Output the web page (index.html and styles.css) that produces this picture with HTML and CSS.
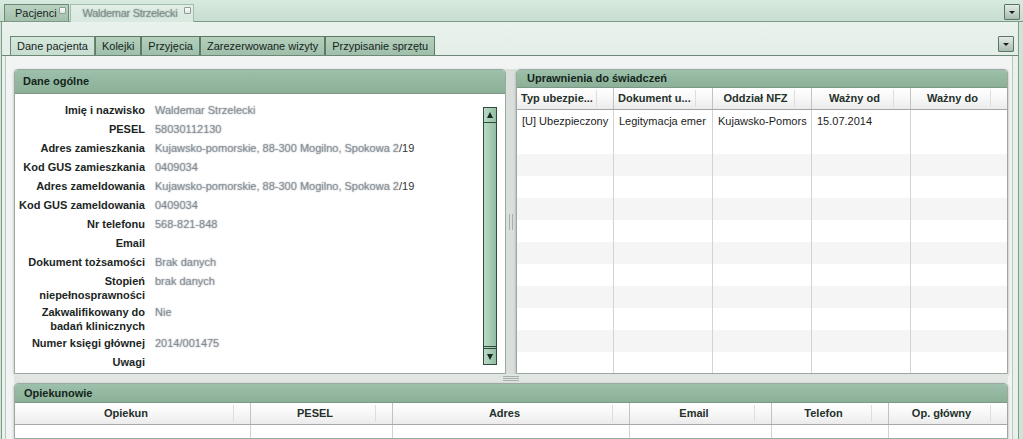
FILE: index.html
```html
<!DOCTYPE html>
<html lang="pl">
<head>
<meta charset="utf-8">
<title>Pacjenci</title>
<link rel="stylesheet" href="styles.css">
</head>
<body>
<div class="app">
  <div class="top-strip">
    <div class="outer-tabs">
      <div class="otab">Pacjenci<span class="close"></span></div>
      <div class="otab active"><span class="blur tabname">Waldemar Strzelecki</span><span class="close"></span></div>
    </div>
    <div class="dd-btn outer-dd"><span class="tri"></span></div>
  </div>

  <div class="frame">
    <div class="inner-bar">
      <div class="itabs">
        <div class="itab active">Dane pacjenta</div>
        <div class="itab">Kolejki</div>
        <div class="itab">Przyjęcia</div>
        <div class="itab">Zarezerwowane wizyty</div>
        <div class="itab">Przypisanie sprzętu</div>
      </div>
      <div class="dd-btn inner-dd"><span class="tri"></span></div>
    </div>

    <div class="content">
      <div class="top-row">
        <section class="panel left">
          <header class="ph">Dane ogólne</header>
          <div class="pbody form">
            <div class="fields">
              <div class="f"><div class="lab">Imię i nazwisko</div><div class="val"><span class="blur">Waldemar Strzelecki</span></div></div>
              <div class="f"><div class="lab">PESEL</div><div class="val"><span class="blur">58030112130</span></div></div>
              <div class="f"><div class="lab">Adres zamieszkania</div><div class="val"><span class="blur">Kujawsko-pomorskie, 88-300 Mogilno, Spokowa 2</span>/19</div></div>
              <div class="f"><div class="lab">Kod GUS zamieszkania</div><div class="val"><span class="blur">0409034</span></div></div>
              <div class="f"><div class="lab">Adres zameldowania</div><div class="val"><span class="blur">Kujawsko-pomorskie, 88-300 Mogilno, Spokowa 2</span>/19</div></div>
              <div class="f"><div class="lab">Kod GUS zameldowania</div><div class="val"><span class="blur">0409034</span></div></div>
              <div class="f"><div class="lab">Nr telefonu</div><div class="val"><span class="blur">568-821-848</span></div></div>
              <div class="f"><div class="lab">Email</div><div class="val"></div></div>
              <div class="f"><div class="lab">Dokument tożsamości</div><div class="val"><span class="blur">Brak danych</span></div></div>
              <div class="f"><div class="lab">Stopień niepełnosprawności</div><div class="val"><span class="blur">brak danych</span></div></div>
              <div class="f"><div class="lab">Zakwalifikowany do badań klinicznych</div><div class="val"><span class="blur">Nie</span></div></div>
              <div class="f"><div class="lab">Numer księgi głównej</div><div class="val"><span class="blur">2014/001475</span></div></div>
              <div class="f"><div class="lab">Uwagi</div><div class="val"></div></div>
            </div>
            <div class="vscroll">
              <div class="sb-btn up"><span class="tri-up"></span></div>
              <div class="sb-btn down"><span class="tri-down"></span></div>
            </div>
          </div>
        </section>

        <div class="vsplit"><span class="grip-v"></span></div>

        <section class="panel right">
          <header class="ph">Uprawnienia do świadczeń</header>
          <div class="grid up-grid">
            <div class="g-head">
              <div class="hc lefttxt">Typ ubezpie...</div>
              <div class="hc lefttxt">Dokument u...</div>
              <div class="hc">Oddział NFZ</div>
              <div class="hc">Ważny od</div>
              <div class="hc">Ważny do</div>
            </div>
            <div class="g-row"><div class="c">[U] Ubezpieczony</div><div class="c">Legitymacja emer</div><div class="c">Kujawsko-Pomors</div><div class="c">15.07.2014</div><div class="c"></div></div>
            <div class="g-row"><div class="c"></div><div class="c"></div><div class="c"></div><div class="c"></div><div class="c"></div></div>
            <div class="g-row"><div class="c"></div><div class="c"></div><div class="c"></div><div class="c"></div><div class="c"></div></div>
            <div class="g-row"><div class="c"></div><div class="c"></div><div class="c"></div><div class="c"></div><div class="c"></div></div>
            <div class="g-row"><div class="c"></div><div class="c"></div><div class="c"></div><div class="c"></div><div class="c"></div></div>
            <div class="g-row"><div class="c"></div><div class="c"></div><div class="c"></div><div class="c"></div><div class="c"></div></div>
            <div class="g-row"><div class="c"></div><div class="c"></div><div class="c"></div><div class="c"></div><div class="c"></div></div>
            <div class="g-row"><div class="c"></div><div class="c"></div><div class="c"></div><div class="c"></div><div class="c"></div></div>
            <div class="g-row"><div class="c"></div><div class="c"></div><div class="c"></div><div class="c"></div><div class="c"></div></div>
            <div class="g-row"><div class="c"></div><div class="c"></div><div class="c"></div><div class="c"></div><div class="c"></div></div>
            <div class="g-row"><div class="c"></div><div class="c"></div><div class="c"></div><div class="c"></div><div class="c"></div></div>
            <div class="g-row"><div class="c"></div><div class="c"></div><div class="c"></div><div class="c"></div><div class="c"></div></div>
            <div class="g-row"><div class="c"></div><div class="c"></div><div class="c"></div><div class="c"></div><div class="c"></div></div>
          </div>
        </section>
      </div>

      <div class="hsplit"><span class="grip-h"></span></div>

      <section class="panel bottom">
        <header class="ph">Opiekunowie</header>
        <div class="grid op-grid">
          <div class="g-head">
            <div class="hc">Opiekun</div>
            <div class="hc">PESEL</div>
            <div class="hc">Adres</div>
            <div class="hc">Email</div>
            <div class="hc">Telefon</div>
            <div class="hc">Op. główny</div>
          </div>
          <div class="g-row"><div class="c"></div><div class="c"></div><div class="c"></div><div class="c"></div><div class="c"></div><div class="c"></div></div>
          <div class="g-row"><div class="c"></div><div class="c"></div><div class="c"></div><div class="c"></div><div class="c"></div><div class="c"></div></div>
        </div>
      </section>
    </div>
  </div>
</div>
</body>
</html>
```

FILE: styles.css
```css
* { box-sizing: border-box; margin: 0; padding: 0; }
html, body { width: 1023px; height: 439px; overflow: hidden; }
body {
  font-family: "Liberation Sans", Arial, sans-serif;
  font-size: 11px;
  color: #1d2a22;
  background: #cfe3d7;
}
.app { display: flex; flex-direction: column; height: 439px; }

/* ---------- top strip with outer tabs ---------- */
.top-strip {
  height: 22px;
  flex: none;
  display: flex;
  justify-content: space-between;
  align-items: flex-end;
  padding: 0 3px 0 4px;
  background: linear-gradient(#d7eade, #c7ded0);
  border-bottom: 1px solid #7d9a87;
}
.outer-tabs { display: flex; align-items: flex-end; gap: 1px; height: 100%; }
.otab {
  position: relative;
  height: 17px;
  line-height: 16px;
  padding: 0 11px 0 10px;
  border: 1px solid #6c8a76;
  border-bottom: none;
  background: linear-gradient(#b9d3c1, #a2bfab);
  color: #16241b;
  white-space: nowrap;
}
.otab.active {
  height: 18px;
  margin-bottom: -1px;
  padding: 0 16px 0 12px;
  background: linear-gradient(#e2eee6, #d9e9df);
  border-color: #a5bcad;
}
.close {
  position: absolute;
  top: 2px;
  right: 2px;
  width: 7px;
  height: 7px;
  border: 1px solid #8e9c93;
  border-radius: 1px;
  background: linear-gradient(#fbfdfc, #dfe7e2);
}
.blur {
  display: inline-block;
  color: rgba(120, 128, 138, 0.55);
  text-shadow: 0 0 1.2px rgba(110, 118, 128, 0.95);
}
.tabname { color: rgba(110, 135, 122, 0.55); letter-spacing: -0.3px; }

.dd-btn {
  width: 16px;
  height: 16px;
  border: 1px solid #5b7464;
  border-radius: 1px;
  background: linear-gradient(#e3ebe6, #a9bcb0);
  display: flex;
  align-items: center;
  justify-content: center;
  flex: none;
}
.outer-dd { align-self: flex-start; margin-top: 4px; }
.tri {
  width: 0; height: 0;
  border-left: 3px solid transparent;
  border-right: 3px solid transparent;
  border-top: 3px solid #1c1c1c;
}

/* ---------- frame & inner tabs ---------- */
.frame {
  flex: 1;
  min-height: 0;
  display: flex;
  flex-direction: column;
  margin: 0 4px 0 1px;
  border-left: 1px solid #7f9b89;
  border-right: 1px solid #7f9b89;
  background: #e8f1eb;
}
.inner-bar {
  height: 34px;
  flex: none;
  display: flex;
  justify-content: space-between;
  align-items: flex-end;
  padding: 0 4px 0 8px;
  border-bottom: 1px solid #6c8776;
  background: linear-gradient(#e9f2ec, #e4eee8);
}
.itabs { display: flex; }
.itab {
  height: 19px;
  line-height: 18px;
  padding: 0 6px;
  border: 1px solid #5d7a67;
  border-bottom: none;
  background: linear-gradient(#b5d0bd, #9fbfaa);
  color: #16241b;
  white-space: nowrap;
}
.itab.active { background: linear-gradient(#d6e8dc, #c7ddcf); border-color: #6c8776; }
.inner-dd { align-self: flex-start; margin-top: 14px; }

/* ---------- content ---------- */
.content {
  flex: 1;
  min-height: 0;
  margin: 0 5px 0 3px;
  border-left: 1px solid #bac6be;
  border-right: 1px solid #bac6be;
  background: #f1f4f2;
  padding: 13px 4px 0 8px;
  display: flex;
  flex-direction: column;
}
.top-row { height: 305px; flex: none; display: flex; }

.panel {
  border: 1px solid #9aaaa0;
  border-radius: 4px 4px 0 0;
  background: #fff;
  display: flex;
  flex-direction: column;
  box-shadow: 0 1px 3px rgba(0, 0, 0, 0.28);
  overflow: hidden;
  min-height: 0;
}
.panel.left { width: 492px; flex: none; }
.panel.right { flex: 1; }
.panel.bottom { flex: 1; }

.ph {
  flex: none;
  font-weight: bold;
  color: #13251a;
  background: linear-gradient(#9dc0aa, #8caf98);
  border-bottom: 1px solid #7c9886;
  padding-left: 8px;
}
.left .ph { height: 24px; line-height: 23px; }
.right .ph { height: 18px; line-height: 17px; padding-left: 10px; }
.bottom .ph { height: 19px; line-height: 18px; padding-left: 9px; }

/* ---------- form ---------- */
.pbody.form { flex: 1; display: flex; min-height: 0; }
.fields { flex: 1; padding-top: 6px; overflow: hidden; }
.f {
  display: grid;
  grid-template-columns: 130px 1fr;
  column-gap: 10px;
  min-height: 19px;
  padding-top: 3px;
  line-height: 14px;
}
.lab { text-align: right; font-weight: bold; color: #1b261f; }
.val { white-space: nowrap; color: #333; }

.vscroll {
  width: 14px;
  flex: none;
  margin: 13px 8px 8px 0;
  border: 1px solid #2f4b3a;
  background: linear-gradient(90deg, #b9dac6, #a3c9b2 60%, #93bca2);
  display: flex;
  flex-direction: column;
  justify-content: space-between;
}
.sb-btn { display: flex; align-items: center; justify-content: center; }
.sb-btn.up { height: 15px; border-bottom: 1px solid #2f4b3a; }
.sb-btn.down { height: 18px; border-top: 3px double #2f4b3a; }
.tri-up {
  width: 0; height: 0;
  border-left: 3px solid transparent;
  border-right: 3px solid transparent;
  border-bottom: 6px solid #16291d;
}
.tri-down {
  width: 0; height: 0;
  border-left: 3px solid transparent;
  border-right: 3px solid transparent;
  border-top: 6px solid #16291d;
}

/* ---------- splitters ---------- */
.vsplit {
  width: 10px;
  flex: none;
  display: flex;
  align-items: center;
  justify-content: center;
  background: #dadfdc;
}
.grip-v { width: 4px; height: 16px; border-left: 1px solid #a8b0ab; border-right: 1px solid #a8b0ab; }
.hsplit {
  height: 9px;
  flex: none;
  display: flex;
  align-items: center;
  justify-content: center;
  background: #e2e6e3;
}
.grip-h { width: 16px; height: 5px; border-top: 1px solid #a8b0ab; border-bottom: 1px solid #a8b0ab; position: relative; }
.grip-h::after { content: ""; position: absolute; left: 0; right: 0; top: 1px; border-top: 1px solid #a8b0ab; }

/* ---------- grids ---------- */
.grid { flex: 1; display: flex; flex-direction: column; min-height: 0; overflow: hidden; }
.g-head, .g-row { display: grid; flex: none; }
.up-grid .g-head, .up-grid .g-row { grid-template-columns: 97px 99px 99px 99px 1fr; }
.op-grid .g-head, .op-grid .g-row { grid-template-columns: 236px 142px 237px 142px 117px 1fr; }

.g-head {
  height: 22px;
  background: linear-gradient(#ffffff, #f7f7f7 50%, #ebebeb);
  border-bottom: 1px solid #a7a7a7;
}
.hc {
  position: relative;
  border-right: 1px solid #c2c2c2;
  font-weight: bold;
  color: #24302a;
  line-height: 21px;
  padding: 0 17px 0 4px;
  text-align: center;
  white-space: nowrap;
  overflow: hidden;
}
.hc.lefttxt { text-align: left; }
.hc::after {
  content: "";
  position: absolute;
  right: 16px;
  top: 2px;
  bottom: 2px;
  border-left: 1px solid #dedede;
}
.hc:last-child { border-right: none; }

.g-row { height: 22px; background: #fff; }
.up-grid .g-row:nth-child(2n+4) { background: #f4f5f4; }
.c {
  border-right: 1px solid #d3d3d3;
  line-height: 22px;
  padding-left: 5px;
  white-space: nowrap;
  overflow: hidden;
  color: #1c1c1c;
}
.c:last-child { border-right: none; }
```
